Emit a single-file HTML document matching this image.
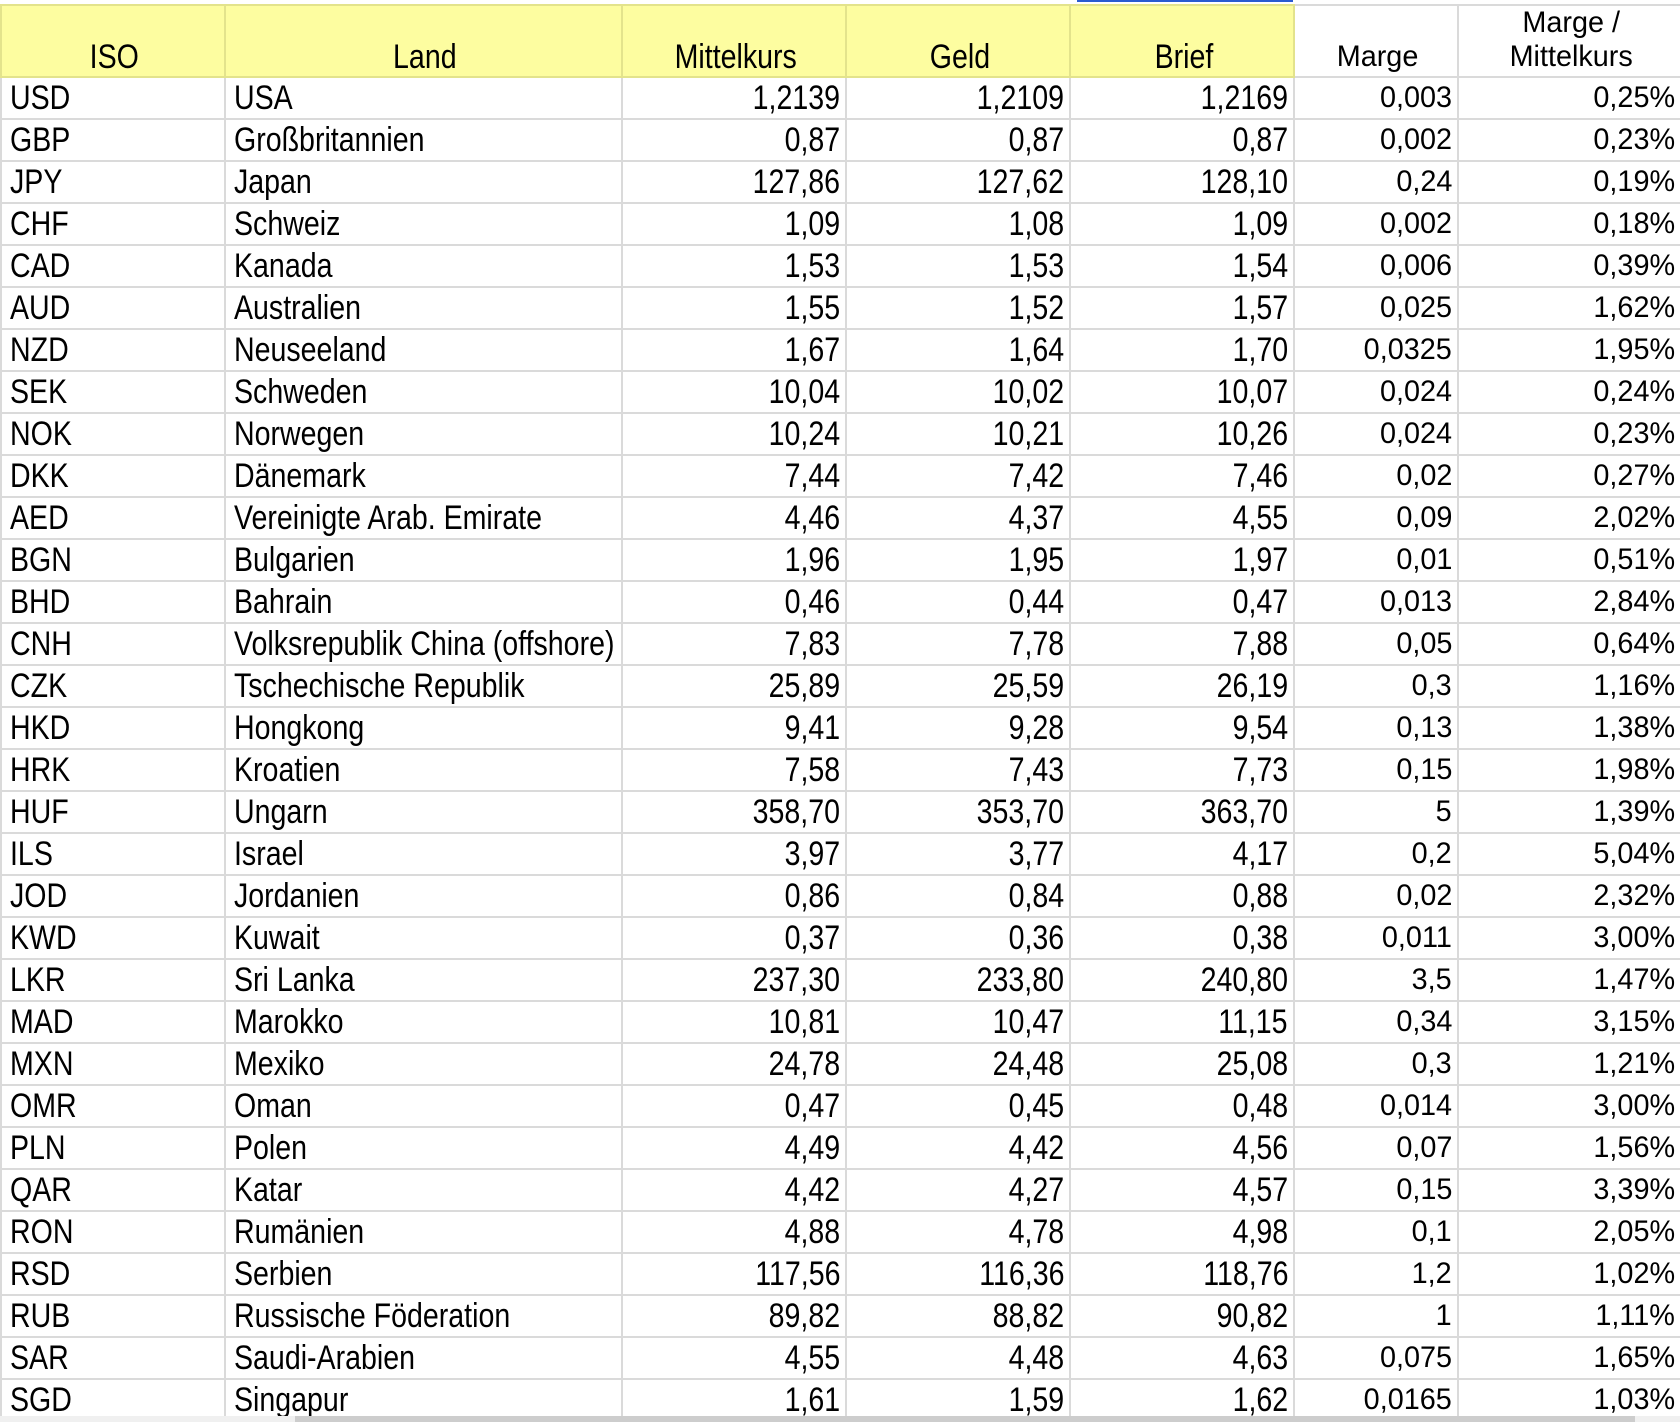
<!DOCTYPE html>
<html><head><meta charset="utf-8"><style>
html,body{margin:0;padding:0;background:#fff;width:1680px;height:1422px;overflow:hidden;position:relative}
table{position:absolute;left:0;top:4px;border-collapse:collapse;table-layout:fixed;width:1680px}
td{border:2px solid #dadada;height:40px;padding:0 5px 0 8px;line-height:40px;white-space:nowrap;overflow:hidden;color:#000;vertical-align:bottom;font-family:"Liberation Sans",sans-serif}
td.n{font-size:34px}
td.n span{display:inline-block;transform:scaleX(.84);transform-origin:left center}
td.n.a span{transform-origin:right center}
td.r{font-size:30px}
td.r span{display:inline-block;transform:scaleX(.96);transform-origin:right center}
td.a{text-align:right}
tr.h td{height:67px;text-align:center;line-height:34px;padding-bottom:2px}
tr.h td span{transform-origin:center center !important}
tr.h td.y{background:#fdfda0;border-color:#e3e38c}
.sb{position:absolute;left:0;top:1416px;width:1680px;height:6px;background:#f0f0f0}
.th{position:absolute;left:295px;top:1416px;width:1340px;height:6px;background:#cdcdcd}
</style></head><body>
<div style="position:absolute;left:1077px;top:0;width:216px;height:2px;background:#2a5bd0"></div>
<table>
<colgroup><col style="width:224px"><col style="width:397px"><col style="width:224px"><col style="width:224px"><col style="width:224px"><col style="width:164px"><col style="width:223px"></colgroup>
<tr class="h"><td class="n y"><span>ISO</span></td><td class="n y"><span>Land</span></td><td class="n y"><span>Mittelkurs</span></td><td class="n y"><span>Geld</span></td><td class="n y"><span>Brief</span></td><td class="r"><span>Marge</span></td><td class="r"><span>Marge /<br>Mittelkurs</span></td></tr>
<tr><td class="n"><span>USD</span></td><td class="n"><span>USA</span></td><td class="n a"><span>1,2139</span></td><td class="n a"><span>1,2109</span></td><td class="n a"><span>1,2169</span></td><td class="r a"><span>0,003</span></td><td class="r a"><span>0,25%</span></td></tr>
<tr><td class="n"><span>GBP</span></td><td class="n"><span>Großbritannien</span></td><td class="n a"><span>0,87</span></td><td class="n a"><span>0,87</span></td><td class="n a"><span>0,87</span></td><td class="r a"><span>0,002</span></td><td class="r a"><span>0,23%</span></td></tr>
<tr><td class="n"><span>JPY</span></td><td class="n"><span>Japan</span></td><td class="n a"><span>127,86</span></td><td class="n a"><span>127,62</span></td><td class="n a"><span>128,10</span></td><td class="r a"><span>0,24</span></td><td class="r a"><span>0,19%</span></td></tr>
<tr><td class="n"><span>CHF</span></td><td class="n"><span>Schweiz</span></td><td class="n a"><span>1,09</span></td><td class="n a"><span>1,08</span></td><td class="n a"><span>1,09</span></td><td class="r a"><span>0,002</span></td><td class="r a"><span>0,18%</span></td></tr>
<tr><td class="n"><span>CAD</span></td><td class="n"><span>Kanada</span></td><td class="n a"><span>1,53</span></td><td class="n a"><span>1,53</span></td><td class="n a"><span>1,54</span></td><td class="r a"><span>0,006</span></td><td class="r a"><span>0,39%</span></td></tr>
<tr><td class="n"><span>AUD</span></td><td class="n"><span>Australien</span></td><td class="n a"><span>1,55</span></td><td class="n a"><span>1,52</span></td><td class="n a"><span>1,57</span></td><td class="r a"><span>0,025</span></td><td class="r a"><span>1,62%</span></td></tr>
<tr><td class="n"><span>NZD</span></td><td class="n"><span>Neuseeland</span></td><td class="n a"><span>1,67</span></td><td class="n a"><span>1,64</span></td><td class="n a"><span>1,70</span></td><td class="r a"><span>0,0325</span></td><td class="r a"><span>1,95%</span></td></tr>
<tr><td class="n"><span>SEK</span></td><td class="n"><span>Schweden</span></td><td class="n a"><span>10,04</span></td><td class="n a"><span>10,02</span></td><td class="n a"><span>10,07</span></td><td class="r a"><span>0,024</span></td><td class="r a"><span>0,24%</span></td></tr>
<tr><td class="n"><span>NOK</span></td><td class="n"><span>Norwegen</span></td><td class="n a"><span>10,24</span></td><td class="n a"><span>10,21</span></td><td class="n a"><span>10,26</span></td><td class="r a"><span>0,024</span></td><td class="r a"><span>0,23%</span></td></tr>
<tr><td class="n"><span>DKK</span></td><td class="n"><span>Dänemark</span></td><td class="n a"><span>7,44</span></td><td class="n a"><span>7,42</span></td><td class="n a"><span>7,46</span></td><td class="r a"><span>0,02</span></td><td class="r a"><span>0,27%</span></td></tr>
<tr><td class="n"><span>AED</span></td><td class="n"><span>Vereinigte Arab. Emirate</span></td><td class="n a"><span>4,46</span></td><td class="n a"><span>4,37</span></td><td class="n a"><span>4,55</span></td><td class="r a"><span>0,09</span></td><td class="r a"><span>2,02%</span></td></tr>
<tr><td class="n"><span>BGN</span></td><td class="n"><span>Bulgarien</span></td><td class="n a"><span>1,96</span></td><td class="n a"><span>1,95</span></td><td class="n a"><span>1,97</span></td><td class="r a"><span>0,01</span></td><td class="r a"><span>0,51%</span></td></tr>
<tr><td class="n"><span>BHD</span></td><td class="n"><span>Bahrain</span></td><td class="n a"><span>0,46</span></td><td class="n a"><span>0,44</span></td><td class="n a"><span>0,47</span></td><td class="r a"><span>0,013</span></td><td class="r a"><span>2,84%</span></td></tr>
<tr><td class="n"><span>CNH</span></td><td class="n"><span>Volksrepublik China (offshore)</span></td><td class="n a"><span>7,83</span></td><td class="n a"><span>7,78</span></td><td class="n a"><span>7,88</span></td><td class="r a"><span>0,05</span></td><td class="r a"><span>0,64%</span></td></tr>
<tr><td class="n"><span>CZK</span></td><td class="n"><span>Tschechische Republik</span></td><td class="n a"><span>25,89</span></td><td class="n a"><span>25,59</span></td><td class="n a"><span>26,19</span></td><td class="r a"><span>0,3</span></td><td class="r a"><span>1,16%</span></td></tr>
<tr><td class="n"><span>HKD</span></td><td class="n"><span>Hongkong</span></td><td class="n a"><span>9,41</span></td><td class="n a"><span>9,28</span></td><td class="n a"><span>9,54</span></td><td class="r a"><span>0,13</span></td><td class="r a"><span>1,38%</span></td></tr>
<tr><td class="n"><span>HRK</span></td><td class="n"><span>Kroatien</span></td><td class="n a"><span>7,58</span></td><td class="n a"><span>7,43</span></td><td class="n a"><span>7,73</span></td><td class="r a"><span>0,15</span></td><td class="r a"><span>1,98%</span></td></tr>
<tr><td class="n"><span>HUF</span></td><td class="n"><span>Ungarn</span></td><td class="n a"><span>358,70</span></td><td class="n a"><span>353,70</span></td><td class="n a"><span>363,70</span></td><td class="r a"><span>5</span></td><td class="r a"><span>1,39%</span></td></tr>
<tr><td class="n"><span>ILS</span></td><td class="n"><span>Israel</span></td><td class="n a"><span>3,97</span></td><td class="n a"><span>3,77</span></td><td class="n a"><span>4,17</span></td><td class="r a"><span>0,2</span></td><td class="r a"><span>5,04%</span></td></tr>
<tr><td class="n"><span>JOD</span></td><td class="n"><span>Jordanien</span></td><td class="n a"><span>0,86</span></td><td class="n a"><span>0,84</span></td><td class="n a"><span>0,88</span></td><td class="r a"><span>0,02</span></td><td class="r a"><span>2,32%</span></td></tr>
<tr><td class="n"><span>KWD</span></td><td class="n"><span>Kuwait</span></td><td class="n a"><span>0,37</span></td><td class="n a"><span>0,36</span></td><td class="n a"><span>0,38</span></td><td class="r a"><span>0,011</span></td><td class="r a"><span>3,00%</span></td></tr>
<tr><td class="n"><span>LKR</span></td><td class="n"><span>Sri Lanka</span></td><td class="n a"><span>237,30</span></td><td class="n a"><span>233,80</span></td><td class="n a"><span>240,80</span></td><td class="r a"><span>3,5</span></td><td class="r a"><span>1,47%</span></td></tr>
<tr><td class="n"><span>MAD</span></td><td class="n"><span>Marokko</span></td><td class="n a"><span>10,81</span></td><td class="n a"><span>10,47</span></td><td class="n a"><span>11,15</span></td><td class="r a"><span>0,34</span></td><td class="r a"><span>3,15%</span></td></tr>
<tr><td class="n"><span>MXN</span></td><td class="n"><span>Mexiko</span></td><td class="n a"><span>24,78</span></td><td class="n a"><span>24,48</span></td><td class="n a"><span>25,08</span></td><td class="r a"><span>0,3</span></td><td class="r a"><span>1,21%</span></td></tr>
<tr><td class="n"><span>OMR</span></td><td class="n"><span>Oman</span></td><td class="n a"><span>0,47</span></td><td class="n a"><span>0,45</span></td><td class="n a"><span>0,48</span></td><td class="r a"><span>0,014</span></td><td class="r a"><span>3,00%</span></td></tr>
<tr><td class="n"><span>PLN</span></td><td class="n"><span>Polen</span></td><td class="n a"><span>4,49</span></td><td class="n a"><span>4,42</span></td><td class="n a"><span>4,56</span></td><td class="r a"><span>0,07</span></td><td class="r a"><span>1,56%</span></td></tr>
<tr><td class="n"><span>QAR</span></td><td class="n"><span>Katar</span></td><td class="n a"><span>4,42</span></td><td class="n a"><span>4,27</span></td><td class="n a"><span>4,57</span></td><td class="r a"><span>0,15</span></td><td class="r a"><span>3,39%</span></td></tr>
<tr><td class="n"><span>RON</span></td><td class="n"><span>Rumänien</span></td><td class="n a"><span>4,88</span></td><td class="n a"><span>4,78</span></td><td class="n a"><span>4,98</span></td><td class="r a"><span>0,1</span></td><td class="r a"><span>2,05%</span></td></tr>
<tr><td class="n"><span>RSD</span></td><td class="n"><span>Serbien</span></td><td class="n a"><span>117,56</span></td><td class="n a"><span>116,36</span></td><td class="n a"><span>118,76</span></td><td class="r a"><span>1,2</span></td><td class="r a"><span>1,02%</span></td></tr>
<tr><td class="n"><span>RUB</span></td><td class="n"><span>Russische Föderation</span></td><td class="n a"><span>89,82</span></td><td class="n a"><span>88,82</span></td><td class="n a"><span>90,82</span></td><td class="r a"><span>1</span></td><td class="r a"><span>1,11%</span></td></tr>
<tr><td class="n"><span>SAR</span></td><td class="n"><span>Saudi-Arabien</span></td><td class="n a"><span>4,55</span></td><td class="n a"><span>4,48</span></td><td class="n a"><span>4,63</span></td><td class="r a"><span>0,075</span></td><td class="r a"><span>1,65%</span></td></tr>
<tr><td class="n"><span>SGD</span></td><td class="n"><span>Singapur</span></td><td class="n a"><span>1,61</span></td><td class="n a"><span>1,59</span></td><td class="n a"><span>1,62</span></td><td class="r a"><span>0,0165</span></td><td class="r a"><span>1,03%</span></td></tr>
</table>
<div class="sb"></div><div class="th"></div>
</body></html>
